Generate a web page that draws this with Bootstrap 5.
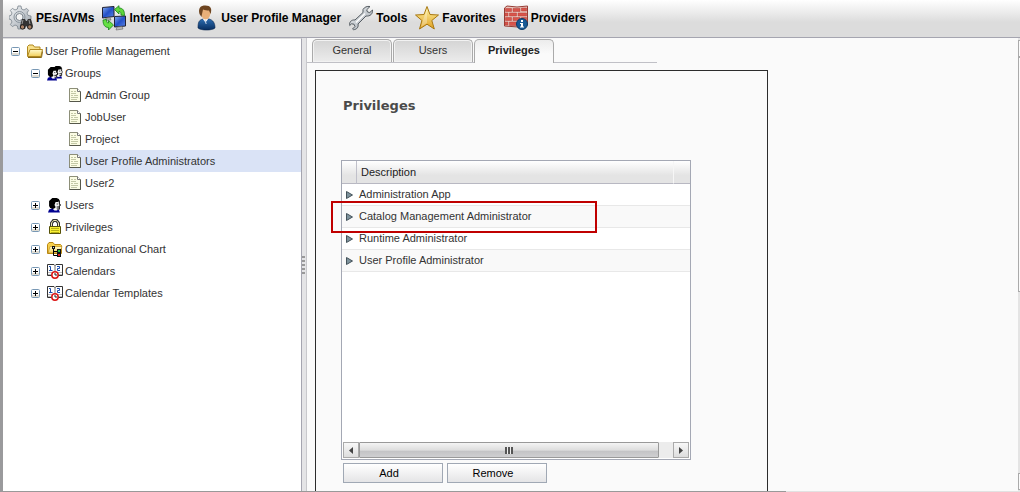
<!DOCTYPE html>
<html lang="en">
<head>
<meta charset="utf-8">
<meta name="viewport" content="width=device-width, initial-scale=1">
<title>User Profile Management</title>
<link href="https://cdn.jsdelivr.net/npm/bootstrap@5.3.0/dist/css/bootstrap.min.css" rel="stylesheet">
<style>
  body { font: 11px/22px "Liberation Sans", Arial, sans-serif; color: #333; background: #fafafa; }
  .shell { height: 100vh; border-left: 3px solid #9a9a9c; }
  .baseline-rule { height: 1px; background: linear-gradient(90deg, #999 77%, #e2e2e2 77%); }
  .toolbar { height: 38px; gap: 8px; padding: 0 6px 2px; border-bottom: 1px solid #a5a5b0; background: linear-gradient(#fff, #dcdcdc 60%, #dcdcdc); }
  .toolbar a { gap: 3px; font-size: 12px; font-weight: bold; color: #000; }
  .side { flex: 0 0 299px; background: #fff; padding-top: 1px; border-top: 1px solid #ddd; border-right: 1px solid #a5a5b0; }
  .node { height: 22px; gap: 2px; padding-left: 8px; }
  .node.lv2 { padding-left: 28px; }
  .node.lv3 { padding-left: 64px; }
  .node.chosen { background: #dae3f6; }
  .node a { color: #333; }
  .toggle { width: 9px; height: 9px; margin-right: 5px; }
  .splitter { flex: 0 0 5px; background: #e4e4e6; border-right: 1px solid #c8c8cc; }
  .splitter i { width: 3px; height: 18px; background: repeating-linear-gradient(#999 0 2px, transparent 2px 4px); }
  .tabs { width: 350px; padding: 1px 0 0 5px; gap: 1px; border-bottom: 1px solid #c0c0c6; }
  .tabs button { width: 80px; height: 23px; padding: 0 0 2px; line-height: 20px; color: #333; border: 1px solid #aaa; border-bottom: 0; border-radius: 5px 5px 0 0; background: linear-gradient(#d4d4d4, #ececec); box-shadow: inset 0 0 0 1px #f2f2f2; }
  .tabs button.active { height: 24px; padding-bottom: 4px; margin-bottom: -1px; font-weight: bold; color: #222; background: linear-gradient(#ececec, #fafafa 60%); box-shadow: none; }
  .panel { flex: 1 1 auto; max-width: 453px; margin: 7px 0 0 8px; padding: 24px 25px 8px; border: 1px solid #2c2c2c; border-bottom: 0; }
  .panel h1 { margin: 0 0 43px 2px; font: bold 13px/22px "DejaVu Sans", Verdana, sans-serif; color: #4a4a4a; }
  .gridbox { max-width: 350px; height: 300px; border: 1px solid #a4a8b4; background: #fff; }
  .gridbox table { table-layout: fixed; border-collapse: separate; border-spacing: 0; }
  .gridbox th { height: 23px; padding: 0 4px; font-weight: normal; line-height: 22px; border-bottom: 1px solid #b8b8c2; background: linear-gradient(#fff, #e4e4e4 65%); color: #222; }
  .gridbox th + th { border-left: 1px solid #c0c0ca; }
  .gridbox th:last-child { border-left-color: #f6f6f6; }
  .gridbox td { height: 22px; padding: 0 3px; line-height: 21px; border-bottom: 1px solid #e8e8e8; }
  .gridbox tbody tr:nth-child(even) { background: #f9f9f9; }
  .gridbox td:first-child { padding: 0 0 0 4px; }
  .gridbox td svg { vertical-align: -1px; }
  .hbar { height: 16px; margin: 0 1px 1px; background: #ececec; }
  .hbar button { width: 16px; padding: 0; border: 1px solid #aaa; background: linear-gradient(#f8f8f8, #ddd); }
  .hthumb { width: 300px; border: 1px solid #999; border-radius: 1px; background: linear-gradient(#f4f4f4, #dedede 50%, #c4c4c6 60%, #cfcfd1); }
  .hthumb i { width: 8px; height: 7px; background: repeating-linear-gradient(90deg, #555 0 2px, #eee 2px 3px); }
  .acts { padding: 3px 2px 0; }
  .act { width: 100px; height: 20px; padding: 0 8px 0 0; line-height: 18px; border: 1px solid #a0a8b4; color: #000; background: linear-gradient(#fff, #e4e4e6); }
  .callout { left: -10px; top: 41px; width: 266px; height: 32px; border: 2px solid #c00000; pointer-events: none; }
  .vbar { flex: 0 0 2px; background: #e4e4e4; padding: 2px 0 1px; }
  .vbar i { border: 1px solid #aaa; border-right: 0; height: 17px; background: #fafafa; }
  .vbar .vthumb { height: 235px; }
</style>
</head>
<body>
<svg width="0" height="0" class="position-absolute" aria-hidden="true">
  <defs>
    <linearGradient id="gold" x1="0" y1="0" x2="0" y2="1"><stop stop-color="#fff6a8"/><stop offset="1" stop-color="#e0a020"/></linearGradient>
    <linearGradient id="folder" x1="0" y1="0" x2="0" y2="1"><stop stop-color="#fffbd0"/><stop offset="1" stop-color="#f2cf5a"/></linearGradient>
    <linearGradient id="steel" x1="0" y1="0" x2="1" y2="1"><stop stop-color="#f4f6f8"/><stop offset="1" stop-color="#9aa2aa"/></linearGradient>
    <linearGradient id="screen" x1="0" y1="0" x2="1" y2="1"><stop stop-color="#86aef0"/><stop offset=".5" stop-color="#2450c8"/><stop offset="1" stop-color="#5a86e4"/></linearGradient>
    <linearGradient id="suit" x1="0" y1="0" x2="0" y2="1"><stop stop-color="#2c6cb0"/><stop offset="1" stop-color="#082e60"/></linearGradient>
    <symbol id="minus" viewBox="0 0 9 9"><rect x=".5" y=".5" width="8" height="8" rx="1" fill="#fff" stroke="#7898b5"/><path d="M1 6h7v2H1z" fill="#dfdcd2"/><path d="M2 4h5v1H2z" fill="#000"/></symbol>
    <symbol id="plus" viewBox="0 0 9 9"><use href="#minus"/><path d="M4 2h1v5H4z" fill="#000"/></symbol>
    <symbol id="doc" viewBox="0 0 16 16"><path d="M2.500 1.500h8l3 3v10h-11z" fill="#fbfce4" stroke="#8d8f78"/><path d="M13.500 4.500v10h-11" fill="none" stroke="#55574a"/><path d="M10.500 1.500v3h3" fill="#fff" stroke="#777"/><path d="M4 4.500h2M7 4.500h2M4 6.500h5M4 8.500h2M7 8.500h4M4 10.500h7M4 12.500h6" stroke="#c3c8a6"/></symbol>
    <symbol id="face" viewBox="0 0 12 16" preserveAspectRatio="none"><path d="M5 4h4l2 3v5l-3 1H5z" fill="#f4f4f4"/><path d="M4 1h4l2 1 1 2-2 1H7L6 8l1 2-1 2H4l-2-1-1-2V4z" fill="#000"/><path d="M10.500 4v3l1 1-1 1v3H8M8 7h1M8 10h2" fill="none" stroke="#111"/><path d="M0 15.500l1-3 3-1 2 2h2l2-1 1 3z" fill="#000090"/><path d="M5 11l1 2h2v-1z" fill="#fff"/></symbol>
    <symbol id="cal" viewBox="0 0 16 16"><path d="M.5 1.500H7l1 1 1-1h6.500v11H9l-1 1-1-1H.500z" fill="#fff" stroke="#333"/><path d="M7.500 2v10h1V2z" fill="#777"/><path d="M1 9.500h6M9 9.500h6M1 11.500h14" stroke="#bbb"/><path d="M2 3.500h1.500V7M2 7.500h3.500M10 3.500h2.500v2h-2v2H13" fill="none" stroke="#1c4eb0"/><circle cx="8" cy="12" r="3.200" fill="#fff" stroke="#dc1616" stroke-width="1.500"/><path d="M8 10v2h2" fill="none" stroke="#222"/></symbol>
    <symbol id="tri" viewBox="0 0 7 8"><path d="M.5.500L6.500 4 .5 7.500z" fill="#7d929c" stroke="#44525a"/></symbol>
  </defs>
</svg>

<div class="shell d-flex flex-column overflow-hidden">
  <nav class="toolbar d-flex align-items-center flex-shrink-0 text-nowrap" aria-label="Main">
    <a href="#" class="d-flex align-items-center text-decoration-none">
      <svg width="24" height="26" viewBox="0 0 24 26"><path d="M9 1h3l.6 3 2.400 1 2.600-1.600 2 2L18 8l1 2.400 3 .6v3l-3 .6-1 2.400 1.600 2.600-2 2L15 20l-2.400 1-.6 3H9l-.6-3L6 20l-2.600 1.600-2-2L3 17l-1-2.400-2-.6v-3l2-.6L3 8 1.400 5.400l2-2L6 5l2.400-1z" fill="url(#steel)" stroke="#7b858e" stroke-width=".8"/><circle cx="10.500" cy="12" r="5.500" fill="none" stroke="#8b959e"/><circle cx="10.500" cy="12" r="3.500" fill="#f4f4f4" stroke="#7d8790"/><path d="M13 14h3l1 2h1l1-2h3l2 7-1 3h-4l-1-3h-1l-1 3h-4l-1-3z" fill="#333"/><circle cx="13.500" cy="22" r="2.200" fill="#a87f64" stroke="#222"/><circle cx="20.800" cy="22" r="2.200" fill="#a87f64" stroke="#222"/><path d="M14 15l-1 4M20 15l1 4" stroke="#999"/></svg>
      PEs/AVMs</a>
    <a href="#" class="d-flex align-items-center text-decoration-none">
      <svg width="24" height="26" viewBox="0 0 24 26"><path d="M.5 2.500l11.500-1v10L.5 13z" fill="url(#screen)" stroke="#223"/><path d="M4 13l4-.5 1 2.500-6 .5z" fill="#aaa" stroke="#666" stroke-width=".6"/><path d="M12.500 11.500l11-.5v10l-11 1z" fill="url(#screen)" stroke="#223"/><path d="M15 22l5-.5 1 2.500-7 1z" fill="#bbb" stroke="#666" stroke-width=".6"/><path d="M12.500 4.500L17 .7V3c4 0 5.500 2.500 5.500 7.500L19 10c0-2.500-.5-3.500-2-3.500V9z" fill="#5fd73c" stroke="#16801a" stroke-width=".8"/><path d="M11.500 20L6.500 25v-2.500C3 22.500 1 20 1 15l3.500-.5c0 2.500.5 3.500 2 3.500v-2.500z" fill="#66e044" stroke="#16801a" stroke-width=".8"/></svg>
      Interfaces</a>
    <a href="#" class="d-flex align-items-center text-decoration-none">
      <svg width="24" height="26" viewBox="0 0 24 26"><path d="M4 23c0-6 1-8 5-9h6c4 1 6 4 6 9-3 2.700-14 2.700-17 0z" fill="url(#suit)" stroke="#06244c" stroke-width=".6"/><path d="M8.500 13.500l3 4 3-4z" fill="#fff"/><path d="M11 15l1.200 4" stroke="#c8d4e8"/><path d="M6.500 5c0-3 2-4 5.500-4s4.500 2 4.500 6-2 7.500-5 7.500-5-5-5-9.500z" fill="#e9b079"/><path d="M5.500 9C4 3 6.500.5 11.500.5c5 0 7 3 5 8.500L15 5.500c-2 0-4-.2-6-1L8 9l-.5 3z" fill="#6d4420"/></svg>
      User Profile Manager</a>
    <a href="#" class="d-flex align-items-center text-decoration-none">
      <svg width="24" height="26" viewBox="0 0 24 26"><path d="M14 4.500C15.500 2 18 1 21 1.500L17.700 4.800l.8 2.200 2.300.5L23.500 5c.5 4-2.500 6.500-6.500 6L9 19c.7 3-1 5.500-4.500 5.700L3.500 24l2.500-2.500-1-2.300-2.500-.4L.7 20.500C0 17 2.500 14.500 6 15l8-7.500z" fill="url(#steel)" stroke="#555c62"/><path d="M7 17.500l9-9" stroke="#fff" stroke-width="1.200"/></svg>
      Tools</a>
    <a href="#" class="d-flex align-items-center text-decoration-none">
      <svg width="24" height="26" viewBox="0 0 24 26"><path d="M12 1.500l3 8 8.500.5-6.700 5.500 2.500 8.500L12 19.200 4.500 24l2.400-8.500L.5 10 9 9.500z" fill="url(#gold)" stroke="#a87812"/><path d="M12 4v14l-6 4 2-7z" fill="#fff" opacity=".3"/></svg>
      Favorites</a>
    <a href="#" class="d-flex align-items-center text-decoration-none">
      <svg width="24" height="26" viewBox="0 0 24 26"><path d="M.5 3L3 1l10 1L23.500 1v19L14 22 .5 21z" fill="#e9c6be" stroke="#963c34"/><path d="M1.500 3.500h6v3h-6zM9 3.500h7v3H9zM17.500 3h5v3h-5zM1 8h3v3H1zM5.500 8h7v3h-7zM14 8h8.500v3H14zM1.500 12.500h6v3h-6zM9 12.500h7v3H9zM17.500 12.500h5v3h-5zM1 17h3v3H1zM5.500 17h7v3.500h-7z" fill="#d9544b" stroke="#b23c36" stroke-width=".5"/><circle cx="18" cy="19" r="5.500" fill="#185a96" stroke="#0d3a66"/><path d="M17 15h2v2h-2zM16 18h3v3.500h1v1h-4v-1h1V19h-1z" fill="#fff"/></svg>
      Providers</a>
  </nav>

  <div class="d-flex flex-grow-1 overflow-hidden">
    <aside class="side text-nowrap overflow-hidden">
      <div class="node d-flex align-items-center">
        <button class="toggle btn p-0 border-0 d-flex" aria-label="Collapse User Profile Management"><svg width="9" height="9"><use href="#minus"/></svg></button>
        <svg width="16" height="16" viewBox="0 0 16 16"><path d="M.5 13V3.500L2 2h4l1.500 2H13v2" fill="#f8e08a" stroke="#b08820"/><path d="M.5 13.500L3 6.500H15.500L14 13.500z" fill="url(#folder)" stroke="#b08820"/><path d="M1 14.500h13.500l1-6" fill="none" stroke="#8a6a18"/></svg>
        <a href="#" class="text-decoration-none">User Profile Management</a>
      </div>
      <div class="node lv2 d-flex align-items-center">
        <button class="toggle btn p-0 border-0 d-flex" aria-label="Collapse Groups"><svg width="9" height="9"><use href="#minus"/></svg></button>
        <svg width="16" height="16" viewBox="0 0 16 16"><use href="#face" x="5" y="0" width="11" height="14"/><use href="#face" x="0" y="1" width="11" height="15"/></svg>
        <a href="#" class="text-decoration-none">Groups</a>
      </div>
      <div class="node lv3 d-flex align-items-center"><svg width="16" height="16"><use href="#doc"/></svg><a href="#" class="text-decoration-none">Admin Group</a></div>
      <div class="node lv3 d-flex align-items-center"><svg width="16" height="16"><use href="#doc"/></svg><a href="#" class="text-decoration-none">JobUser</a></div>
      <div class="node lv3 d-flex align-items-center"><svg width="16" height="16"><use href="#doc"/></svg><a href="#" class="text-decoration-none">Project</a></div>
      <div class="node lv3 chosen d-flex align-items-center"><svg width="16" height="16"><use href="#doc"/></svg><a href="#" class="text-decoration-none">User Profile Administrators</a></div>
      <div class="node lv3 d-flex align-items-center"><svg width="16" height="16"><use href="#doc"/></svg><a href="#" class="text-decoration-none">User2</a></div>
      <div class="node lv2 d-flex align-items-center">
        <button class="toggle btn p-0 border-0 d-flex" aria-label="Expand Users"><svg width="9" height="9"><use href="#plus"/></svg></button>
        <svg width="16" height="16" viewBox="0 0 16 16"><use href="#face" x="1" y="0" width="13" height="16"/></svg>
        <a href="#" class="text-decoration-none">Users</a>
      </div>
      <div class="node lv2 d-flex align-items-center">
        <button class="toggle btn p-0 border-0 d-flex" aria-label="Expand Privileges"><svg width="9" height="9"><use href="#plus"/></svg></button>
        <svg width="16" height="16" viewBox="0 0 16 16"><path d="M4.500 8V4l2-2.500h3l2 2.500v4" fill="none" stroke="#333" stroke-width="3"/><path d="M4.500 8V4l2-2.500h3l2 2.500v4" fill="none" stroke="#e8e4b0"/><path d="M2.500 7.500h11v7h-11z" fill="#f8f034" stroke="#555008"/><path d="M4 9.500h8M4 11.500h8M4 13.500h8" stroke="#b8b018"/></svg>
        <a href="#" class="text-decoration-none">Privileges</a>
      </div>
      <div class="node lv2 d-flex align-items-center">
        <button class="toggle btn p-0 border-0 d-flex" aria-label="Expand Organizational Chart"><svg width="9" height="9"><use href="#plus"/></svg></button>
        <svg width="16" height="16" viewBox="0 0 16 16"><path d="M.5 12.500v-9L2 1.500h4l1.500 2h6l1 1v8z" fill="#f6cf4c" stroke="#b98712"/><path d="M1 12L3 5.500h12L13 12z" fill="url(#folder)" stroke="#b98712" stroke-width=".6"/><path d="M6.500 7v7.500H12M6 10.500h6" fill="none" stroke="#000"/><path d="M5 5h3v3H5z" fill="#111"/><path d="M6 6h1v1H6z" fill="#ddd"/><path d="M10 8h4v4h-4z" fill="#111"/><path d="M11 9h2v2h-2z" fill="#20c040"/><path d="M10 12h4v4h-4z" fill="#111"/><path d="M11 13h2v2h-2z" fill="#e02020"/></svg>
        <a href="#" class="text-decoration-none">Organizational Chart</a>
      </div>
      <div class="node lv2 d-flex align-items-center">
        <button class="toggle btn p-0 border-0 d-flex" aria-label="Expand Calendars"><svg width="9" height="9"><use href="#plus"/></svg></button>
        <svg width="16" height="16"><use href="#cal"/></svg>
        <a href="#" class="text-decoration-none">Calendars</a>
      </div>
      <div class="node lv2 d-flex align-items-center">
        <button class="toggle btn p-0 border-0 d-flex" aria-label="Expand Calendar Templates"><svg width="9" height="9"><use href="#plus"/></svg></button>
        <svg width="16" height="16"><use href="#cal"/></svg>
        <a href="#" class="text-decoration-none">Calendar Templates</a>
      </div>
    </aside>
    <div class="splitter d-flex align-items-center"><i></i></div>

    <main class="flex-grow-1 d-flex flex-column overflow-hidden">
      <div class="tabs d-flex align-items-end flex-shrink-0" role="tablist">
        <button role="tab" aria-selected="false">General</button>
        <button role="tab" aria-selected="false">Users</button>
        <button role="tab" aria-selected="true" class="active">Privileges</button>
      </div>
      <section class="panel">
        <h1>Privileges</h1>
        <div class="position-relative">
          <div class="gridbox d-flex flex-column">
            <table class="w-100">
              <colgroup><col width="14"><col><col width="17"></colgroup>
              <thead><tr><th></th><th>Description</th><th></th></tr></thead>
              <tbody>
                <tr><td><svg width="7" height="8"><use href="#tri"/></svg></td><td colspan="2">Administration App</td></tr>
                <tr><td><svg width="7" height="8"><use href="#tri"/></svg></td><td colspan="2">Catalog Management Administrator</td></tr>
                <tr><td><svg width="7" height="8"><use href="#tri"/></svg></td><td colspan="2">Runtime Administrator</td></tr>
                <tr><td><svg width="7" height="8"><use href="#tri"/></svg></td><td colspan="2">User Profile Administrator</td></tr>
              </tbody>
            </table>
            <div class="hbar d-flex mt-auto">
              <button class="d-flex align-items-center justify-content-center" aria-label="Scroll left"><svg width="4" height="7" viewBox="0 0 4 7"><path d="M4 0v7L0 3.500z" fill="#444"/></svg></button>
              <div class="hthumb d-flex align-items-center justify-content-center"><i></i></div>
              <button class="d-flex align-items-center justify-content-center ms-auto" aria-label="Scroll right"><svg width="4" height="7" viewBox="0 0 4 7"><path d="M0 0v7l4-3.500z" fill="#444"/></svg></button>
            </div>
          </div>
          <div class="callout position-absolute"></div>
        </div>
        <div class="acts d-flex gap-1">
          <button class="act">Add</button>
          <button class="act">Remove</button>
        </div>
      </section>
    </main>
    <div class="vbar d-flex flex-column"><i></i><i class="vthumb"></i><i class="mt-auto"></i></div>
  </div>
  <div class="baseline-rule flex-shrink-0"></div>
</div>
<script src="https://cdn.jsdelivr.net/npm/bootstrap@5.3.0/dist/js/bootstrap.bundle.min.js"></script>
</body>
</html>
